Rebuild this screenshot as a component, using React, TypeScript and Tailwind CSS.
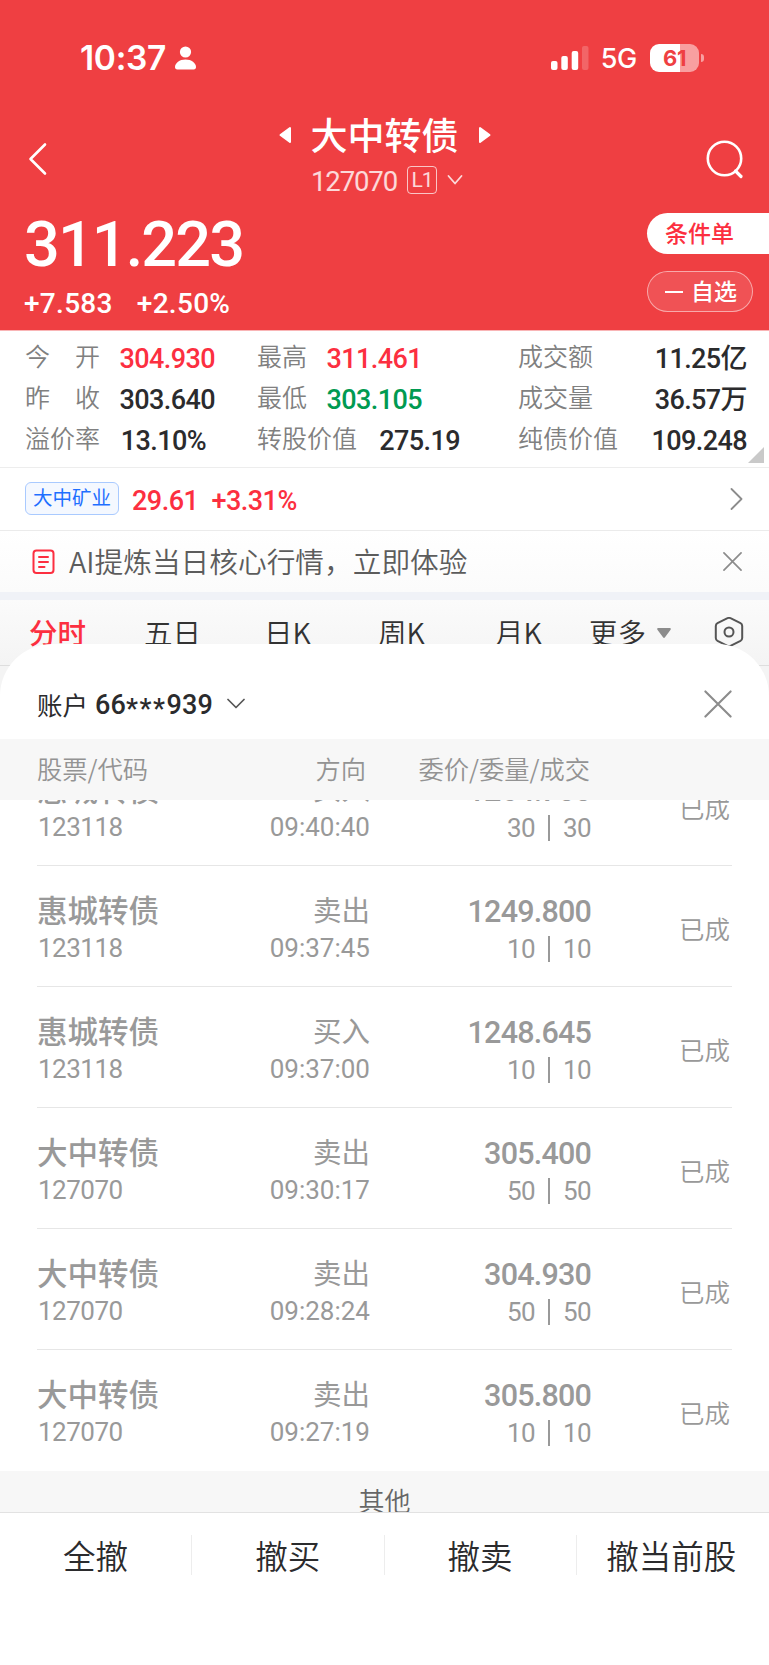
type Order = {
  name: string;
  code: string;
  side: string;
  time: string;
  price: string;
  qty: number;
};

const orders: Order[] = [
  { name: '惠城转债', code: '123118', side: '买入', time: '09:40:40', price: '1264.700', qty: 30 },
  { name: '惠城转债', code: '123118', side: '卖出', time: '09:37:45', price: '1249.800', qty: 10 },
  { name: '惠城转债', code: '123118', side: '买入', time: '09:37:00', price: '1248.645', qty: 10 },
  { name: '大中转债', code: '127070', side: '卖出', time: '09:30:17', price: '305.400', qty: 50 },
  { name: '大中转债', code: '127070', side: '卖出', time: '09:28:24', price: '304.930', qty: 50 },
  { name: '大中转债', code: '127070', side: '卖出', time: '09:27:19', price: '305.800', qty: 10 },
];

const NUM = "font-[family-name:Roboto,'Noto_Sans_CJK_SC',sans-serif]";

function StatusBar() {
  return (
    <div className="flex h-[114px] items-center pl-[80px] pr-[65px] pt-0.5 font-[family-name:Inter,sans-serif]">
      <span className="mt-px text-[33.5px] font-semibold leading-none tracking-[-0.3px]">10:37</span>
      <svg className="ml-2 h-6 w-[23px]" viewBox="0 0 22 24" fill="currentColor">
        <circle cx="11" cy="6" r="5.6" />
        <path d="M11 13.5c6 0 10.5 3.6 10.5 7.6 0 1.6-.8 2.4-2.3 2.4H2.8C1.3 23.5.5 22.7.5 21.1.5 17.1 5 13.5 11 13.5z" />
      </svg>
      <svg className="ml-auto h-6 w-[38px]" viewBox="0 0 38 24" fill="currentColor">
        <rect x="0" y="15" width="6.5" height="9" rx="2" />
        <rect x="10.3" y="10" width="6.5" height="14" rx="2" />
        <rect x="20.7" y="5" width="6.5" height="19" rx="2" />
        <rect x="31" y="0" width="6.5" height="24" rx="2" opacity=".2" />
      </svg>
      <span className="ml-3 mt-px text-[27px] font-medium leading-none tracking-[-0.3px]">5G</span>
      <div className="ml-[13px] flex h-[28px] w-[49px] items-center justify-center rounded-[9px] bg-linear-to-r from-white from-62% to-[#f89fa0] to-62% text-[22px] font-bold leading-none tracking-[-0.5px] text-[#ef3f42]">
        61
      </div>
      <span className="ml-0.5 h-2 w-[3px] rounded-r-full bg-[#f89fa0]" />
    </div>
  );
}

function Header() {
  return (
    <header className="h-[330px] bg-[#ef3f42] text-white">
      <StatusBar />
      <div className="flex h-[94px] justify-between">
        <svg className="ml-7 mt-[27px] h-[36px] w-5" viewBox="0 0 20 36" fill="none" stroke="currentColor" strokeWidth="2.6" strokeLinecap="round" strokeLinejoin="round">
          <path d="M17 3.5 2.5 18 17 32.5" />
        </svg>
        <div className="flex flex-col items-center pl-[15px]">
          <div className="flex h-[42px] items-center gap-5">
            <svg className="h-[18px] w-3" viewBox="0 0 12 18" fill="currentColor" stroke="currentColor" strokeWidth="2" strokeLinejoin="round">
              <path d="M11 2v14L1.5 9z" />
            </svg>
            <h1 className="-mt-0.5 text-[37px] font-medium leading-none">大中转债</h1>
            <svg className="h-[18px] w-3" viewBox="0 0 12 18" fill="currentColor" stroke="currentColor" strokeWidth="2" strokeLinejoin="round">
              <path d="M1 2v14l9.5-7z" />
            </svg>
          </div>
          <div className="mt-2.5 flex h-7 items-center pl-[5px] text-white/80">
            <span className={`${NUM} mt-[3px] text-[27.5px] leading-none tracking-[-1.1px]`}>127070</span>
            <span className={`${NUM} ml-[10px] flex h-7 w-[30px] items-center justify-center rounded border border-white/70 text-[21px] leading-none tracking-[-1px]`}>
              L1
            </span>
            <svg className="ml-[10px] h-3 w-4" viewBox="0 0 16 12" fill="none" stroke="currentColor" strokeWidth="1.8" strokeLinecap="round" strokeLinejoin="round">
              <path d="M1.5 2 8 9.5 14.5 2" />
            </svg>
          </div>
        </div>
        <svg className="mr-[25px] mt-[26px] h-10 w-[38px]" viewBox="0 0 38 40" fill="none" stroke="currentColor" strokeWidth="2.6" strokeLinecap="round">
          <circle cx="18.5" cy="18.5" r="16.7" />
          <path d="M29.5 31 35 36.5" strokeWidth="3.2" />
        </svg>
      </div>
      <div className="flex justify-between">
        <div className={`${NUM} pl-6`}>
          <div className="mt-[5px] text-[63px] font-medium leading-[64px] tracking-[-1.9px]">311.223</div>
          <div className="mt-[11px] flex gap-[24px] text-[28px] font-medium leading-[32px] tracking-[0.3px]">
            <span>+7.583</span>
            <span>+2.50%</span>
          </div>
        </div>
        <div className="mt-[5px] flex w-[122px] flex-col gap-[17px] text-[23px] font-medium leading-none">
          <div className="flex h-[41px] items-center rounded-l-full bg-white pb-0.5 pl-[18px] text-[#fc2f40]">条件单</div>
          <div className="flex h-[41px] w-[106px] items-center rounded-full border border-white/50 bg-white/10 pb-0.5 pl-[17px]">
            <span className="mr-2 mt-0.5 h-0.5 w-[18px] bg-white" />
            自选
          </div>
        </div>
      </div>
    </header>
  );
}

type StatProps = {
  label: string;
  value: string;
  color?: string;
  className?: string;
};

function Stat({ label, value, color = 'text-[#2b2b2d]', className = '' }: StatProps) {
  return (
    <div className={`flex h-[41px] items-center ${className}`}>
      <span className="-mt-0.5 text-[25px] font-[350] leading-none whitespace-pre text-[#808080]">{label}</span>
      <span className={`${NUM} ${color} mt-[5px] ml-auto text-[27px] font-medium leading-none tracking-[-0.6px] whitespace-nowrap`}>{value}</span>
    </div>
  );
}

function Stats() {
  return (
    <section className="relative flex h-[138px] border-t border-b border-t-[#f9b5b6] border-b-[#ededed] bg-white pl-[25px] pr-[22px] pt-[5px]">
      <div className="w-[190px]">
        <Stat label={'今\u3000开'} value="304.930" color="text-[#fc2f40]" />
        <Stat label={'昨\u3000收'} value="303.640" />
        <Stat label="溢价率" value="13.10%" className="mr-[9px]" />
      </div>
      <div className="ml-[42px] w-[203px]">
        <Stat label="最高" value="311.461" color="text-[#fc2f40]" className="mr-[38px]" />
        <Stat label="最低" value="303.105" color="text-[#009a51]" className="mr-[38px]" />
        <Stat label="转股价值" value="275.19" />
      </div>
      <div className="ml-auto w-[229px]">
        <Stat label="成交额" value="11.25亿" />
        <Stat label="成交量" value="36.57万" />
        <Stat label="纯债价值" value="109.248" />
      </div>
      <svg className="absolute right-[5px] bottom-[4px] h-4 w-4" viewBox="0 0 16 16" fill="#c9c9c9">
        <path d="M16 0v16H0z" />
      </svg>
    </section>
  );
}

function Cross({ className }: { className: string }) {
  return (
    <svg className={className} viewBox="0 0 20 20" fill="none" stroke="#8c8c8c" strokeLinecap="round">
      <path d="m1 1 18 18M19 1 1 19" />
    </svg>
  );
}

function Tabs() {
  return (
    <nav className="h-[66px] border-b border-[#dedede] bg-linear-to-b from-[#fbfbfb] to-[#f4f4f4]">
      <div className="flex h-16 items-center pl-[29px] text-[28.5px] font-[350] leading-none text-[#333]">
        <span className="w-[115px] font-medium text-[#fc2f40]">分时</span>
        <span className="w-[120px]">五日</span>
        <span className="w-[114px]">日K</span>
        <span className="w-[117px]">周K</span>
        <span className="w-[94px]">月K</span>
        <span>更多</span>
        <svg className="ml-[11px] mt-0.5 h-2.5 w-[14px]" viewBox="0 0 14 10" fill="#8c8c8c">
          <path d="M1.5 0h11c1.3 0 1.7 1 .9 2L8 9.3c-.6.8-1.4.8-2 0L.6 2C-.2 1 .2 0 1.5 0z" />
        </svg>
        <svg className="ml-auto mr-[25px] h-[30px] w-[30px]" viewBox="0 0 30 30" fill="none" stroke="#555" strokeWidth="2">
          <path strokeLinejoin="round" d="M13.5 1.2q1.5-.8 3 0l10 5q1.7.9 1.7 2.8v12q0 1.9-1.7 2.8l-10 5q-1.500.8-3 0l-10-5Q1.800 22.900 1.800 21V9q0-1.900 1.700-2.800z" />
          <circle cx="15" cy="15" r="4.500" />
        </svg>
      </div>
    </nav>
  );
}

function OrderRow({ order }: { order: Order }) {
  return (
    <div className="flex h-[121px] items-center border-b border-[#e6e6e6] pt-[6px] text-[#999] last:border-b-transparent">
      <div className="w-[124px]">
        <div className="-mt-px text-[30.5px] leading-[38px] font-medium">{order.name}</div>
        <div className={`${NUM} mt-px pl-px text-[26px] leading-[38px] tracking-[-0.5px]`}>{order.code}</div>
      </div>
      <div className="ml-auto w-[209px] text-right">
        <div className="-mt-px text-[28.5px] leading-[38px]">{order.side}</div>
        <div className={`${NUM} mt-px text-[26px] leading-[38px]`}>{order.time}</div>
      </div>
      <div className={`${NUM} w-[221px] text-right`}>
        <div className="pt-[2px] text-[30.5px] leading-[38px] font-medium tracking-[-0.8px]">{order.price}</div>
        <div className="-mt-px flex items-center justify-end text-[26px] leading-[38px] tracking-[-0.6px]">
          {order.qty}
          <span className="mx-[13px] h-[26px] w-0.5 bg-[#999]" />
          {order.qty}
        </div>
      </div>
      <div className="-mt-0.5 w-[141px] pr-0.5 text-right text-[25.5px] font-[350] text-[#999]">已成</div>
    </div>
  );
}

function OrderSheet() {
  return (
    <section className="relative -mt-[22px] flex h-[1021px] flex-col overflow-hidden rounded-t-[52px] bg-white">
      <div className="flex h-[95px] shrink-0 items-center px-[37px] pt-[25px] text-[#2b2b2d]">
        <span className="-mt-px text-[25.5px] leading-none">账户</span>
        <span className={`${NUM} ml-[7px] mt-[7px] flex text-[27px] font-medium leading-none tracking-[0.2px]`}>
          66<span className="mt-1 tracking-[1.5px]">***</span>939
        </span>
        <svg className="ml-[14px] h-3 w-[18px]" viewBox="0 0 18 12" fill="none" stroke="#555" strokeWidth="1.7" strokeLinecap="round" strokeLinejoin="round">
          <path d="M1 1.5 9 9.5l8-8" />
        </svg>
        <Cross className="ml-auto h-7 w-7 stroke-[1.5]" />
      </div>
      <div className="z-10 flex h-[61px] shrink-0 items-center bg-[#f7f7f7] pb-0.5 pl-[37px] text-[25.3px] font-[350] leading-none text-[#939393]">
        <span className="w-[112px]">股票/代码</span>
        <span className="w-[217px] text-right">方向</span>
        <span className="w-[224px] text-right">委价/委量/成交</span>
      </div>
      <div className="-mt-[55px] h-[726px] shrink-0 overflow-hidden px-[37px]">
        {orders.map((order) => (
          <OrderRow key={order.time} order={order} />
        ))}
      </div>
      <div className="z-10 h-[41px] shrink-0 overflow-hidden bg-[#f7f7f7] pt-[10px] text-center text-[26px] leading-[38px] font-[350] text-[#666]">其他</div>
      <footer className="grid grow grid-cols-4 content-start border-t border-[#e2e2e2] pt-[22px] text-[#2b2b2d]">
        {['全撤', '撤买', '撤卖', '撤当前股'].map((label) => (
          <button key={label} className="h-10 border-r border-[#ededed] text-[32.5px] leading-10 font-[350] last:border-r-0 last:pr-[3px]">
            {label}
          </button>
        ))}
      </footer>
    </section>
  );
}

function App() {
  return (
    <div className="h-[1665px] w-[769px] overflow-hidden bg-[#f4f4f4] font-[family-name:'Noto_Sans_CJK_SC',sans-serif]">
      <Header />
      <Stats />
      <div className={`${NUM} flex h-[63px] items-center border-b border-[#ebebeb] bg-white pl-[25px] pr-[26px] text-[27px] font-medium leading-none tracking-[-0.5px] text-[#fc2f40]`}>
        <span className="mr-[13px] -mt-px flex h-[33px] w-[94px] items-center justify-center rounded-md border border-[#a9caff] bg-[#f4f8ff] text-[19.5px] font-normal tracking-normal text-[#1f6fff]">
          大中矿业
        </span>
        <span className="mt-1">29.61</span>
        <span className="ml-[13px] mt-1">+3.31%</span>
        <svg className="ml-auto h-6 w-[13px]" viewBox="0 0 13 24" fill="none" stroke="#8c8c8c" strokeWidth="1.8" strokeLinecap="round" strokeLinejoin="round">
          <path d="m1.5 2 10 10-10 10" />
        </svg>
      </div>
      <div className="flex h-[61px] items-center bg-linear-to-b from-white to-[#fbfbfb] pl-8 pr-[27px] text-[28.7px] font-[350] leading-none text-[#5c5c5c]">
        <svg className="h-[26px] w-[23px]" viewBox="0 0 23 26" fill="none" stroke="#fc2f40" strokeWidth="2" strokeLinecap="round">
          <rect x="1.5" y="1.5" width="20" height="22.5" rx="3" />
          <path d="M7 8h9M7 13h9M7 18h5.5" />
        </svg>
        <span className="ml-[14px]">AI提炼当日核心行情，立即体验</span>
        <Cross className="ml-auto h-[19px] w-[19px] stroke-[1.8]" />
      </div>
      <div className="h-2 bg-[#f0f2f7]" />
      <Tabs />
      <OrderSheet />
    </div>
  );
}

export default App;
